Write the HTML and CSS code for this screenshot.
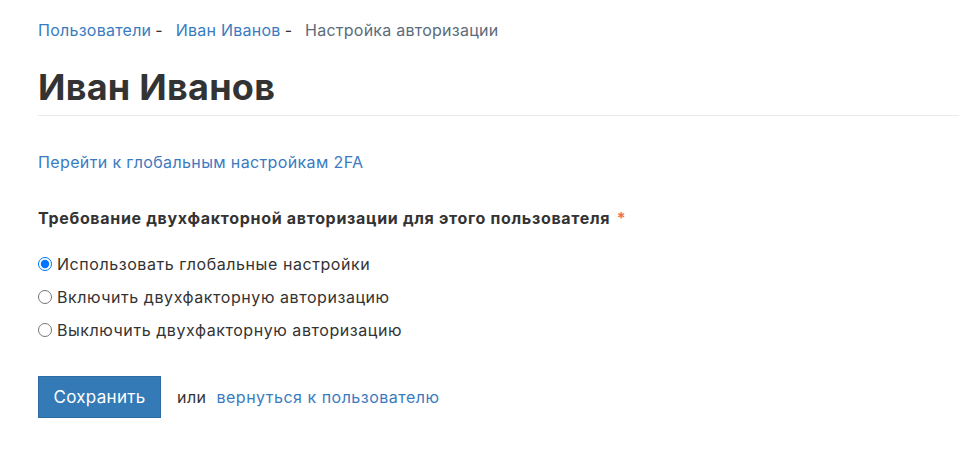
FILE: index.html
```html
<!DOCTYPE html>
<html lang="ru">
<head>
<meta charset="utf-8">
<link rel="stylesheet" href="styles.css">
</head>
<body>
<div class="page">
  <nav class="crumbs">
    <a href="#">Пользователи</a><span class="sep">-</span>
    <a href="#">Иван Иванов</a><span class="sep">-</span>
    <span class="current">Настройка авторизации</span>
  </nav>
  <h1 class="title">Иван Иванов</h1>
  <div class="content">
    <a class="global-link" href="#">Перейти к глобальным настройкам 2FA</a>
    <form class="form">
      <div class="label">Требование двухфакторной авторизации для этого пользователя <span class="req">*</span></div>
      <div class="options">
        <label class="opt"><input type="radio" name="tfa" checked><span>Использовать глобальные настройки</span></label>
        <label class="opt"><input type="radio" name="tfa"><span>Включить двухфакторную авторизацию</span></label>
        <label class="opt"><input type="radio" name="tfa"><span>Выключить двухфакторную авторизацию</span></label>
      </div>
      <div class="actions">
        <button type="button" class="btn">Сохранить</button>
        <span class="or">или</span>
        <a href="#" class="back">вернуться к пользователю</a>
      </div>
    </form>
  </div>
</div>
</body>
</html>
```
FILE: styles.css
```css
html, body { margin: 0; padding: 0; background: #fff; }
body {
  font-family: "Inter", "Noto Sans", sans-serif;
  font-size: 16px;
  color: #333;
  letter-spacing: 0.45px;
}
a { color: #3a7bbf; text-decoration: none; }
.page { padding: 18px 0 0 38px; }
.crumbs { line-height: 24px; letter-spacing: 0.25px; }
.crumbs .sep { color: #333; margin: 0 8px 0 4px; }
.crumbs .current { color: #5b6b7b; }
.title {
  margin: 22px 0 0;
  font-size: 36px;
  font-weight: 700;
  line-height: 46px;
  letter-spacing: 0.25px;
  padding-bottom: 5px;
  border-bottom: 1px solid #eaeaea;
  color: #333;
}
.content { padding-top: 34px; }
.global-link { display: inline-block; line-height: 24px; letter-spacing: 0.37px; }
.form { margin-top: 32px; }
.label { font-weight: 700; line-height: 24px; letter-spacing: 0.68px; }
.req { color: #f0704f; margin-left: 2px; }
.options { margin-top: 22px; display: flex; flex-direction: column; gap: 9px; }
.opt { display: flex; align-items: center; line-height: 24px; letter-spacing: 0.56px; }
.opt input { margin: 0 5px 0 0; width: 14px; height: 14px; }
.actions { margin-top: 34px; display: flex; align-items: center; }
.btn {
  font: inherit;
  font-size: 17px;
  letter-spacing: 0.3px;
  color: #fff;
  background: #337ab7;
  border: 1px solid #2e6da4;
  padding: 0;
  height: 42px;
  width: 123px;
  border-radius: 0;
}
.or { margin-left: 16px; color: #333; }
.back { margin-left: 10px; letter-spacing: 0.5px; }
```
